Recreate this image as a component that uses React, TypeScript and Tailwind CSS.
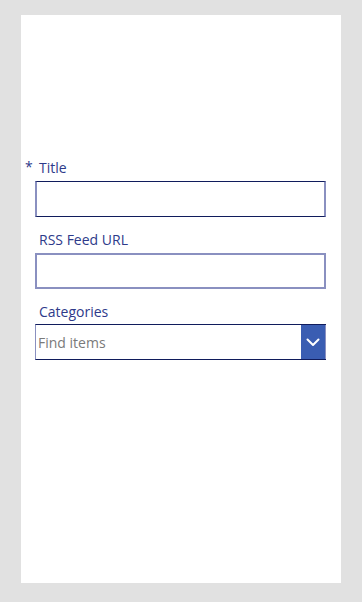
export default function App() {
  return (
    <div
      className="w-[362px] h-[602px] bg-[#e1e1e1] pt-[15px] pl-[21px]"
      style={{ fontFamily: '"Open Sans", "Noto Sans", sans-serif' }}
    >
      <div className="w-[320px] h-[568px] bg-white flex flex-col pt-[142px] pl-[14px]">
        <div className="relative h-5 flex items-center pl-[4px] text-[14px] text-[#2e3a8a]">
          <span className="absolute -left-[10px] top-0 leading-5">*</span>
          <span>Title</span>
        </div>
        <div className="mt-1 w-[291px] h-[36px] border-y border-y-[#101c5c] border-x-2 border-x-[#8a90c0]" />

        <div className="mt-3 h-5 flex items-center pl-[4px] text-[14px] text-[#2e3a8a]">
          RSS Feed URL
        </div>
        <div className="mt-1 w-[291px] h-[36px] border-2 border-[#8a90c0]" />

        <div className="mt-3 h-5 flex items-center pl-[4px] text-[14px] text-[#2e3a8a]">
          Categories
        </div>
        <div className="mt-[3px] w-[291px] h-[36px] flex border-y border-y-[#101c5c] border-l border-l-[#8a90c0]">
          <div className="flex-1 flex items-center pl-[2px] text-[14px] text-[#7a7a7a]">
            Find items
          </div>
          <div className="w-[25px] bg-[#3a5db2] flex items-center justify-center border-r border-r-[#8a90c0]">
            <svg width="14" height="9" viewBox="0 0 14 9" fill="none">
              <polyline
                points="1.5,1.5 7,7 12.5,1.5"
                stroke="white"
                strokeWidth="2"
                strokeLinecap="round"
                strokeLinejoin="round"
              />
            </svg>
          </div>
        </div>
      </div>
    </div>
  );
}
